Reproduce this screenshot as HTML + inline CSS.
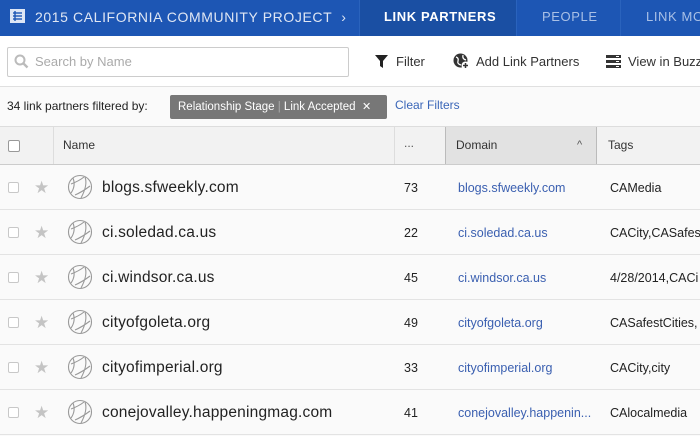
<!DOCTYPE html><html><head><style>
*{box-sizing:border-box;margin:0;padding:0}
body{width:700px;height:436px;overflow:hidden;font-family:"Liberation Sans",sans-serif;background:#fafafa;position:relative;color:#333}
.top{position:absolute;left:0;top:0;width:700px;height:36px;background:#1d56b4}
.top .t{position:absolute;top:0;height:36px;line-height:34px;font-size:14px;letter-spacing:0.6px;color:#fff;white-space:nowrap}
.ab{position:absolute;white-space:nowrap}
.row{position:absolute;left:0;width:700px;height:45px;border-bottom:1px solid #e3e3e3;background:#fafafa}
.row span{position:absolute;top:1px;line-height:44px;white-space:nowrap}
.cb{position:absolute;width:11px;height:11px;border:1px solid #c8c8c8;border-radius:2px;background:#fff}
</style></head><body>
<div class="top">
<svg class="ab" style="left:10px;top:9px" width="15" height="14"><rect x="0.5" y="0.5" width="14" height="13" fill="#dde6f5" stroke="#dde6f5"/><g stroke="#1d56b4" stroke-width="1.4"><line x1="3" y1="4" x2="12" y2="4"/><line x1="3" y1="7" x2="12" y2="7"/><line x1="3" y1="10" x2="12" y2="10"/><line x1="5" y1="2" x2="5" y2="12"/></g></svg>
<div class="t" style="left:35px;color:#dfe6f3">2015 CALIFORNIA COMMUNITY PROJECT&nbsp;&nbsp;›</div>
<div class="ab" style="left:359px;top:0;width:158px;height:36px;background:#1a4fa3;border-left:1px solid #2a63bd;border-right:1px solid #2a63bd"></div>
<div class="t" style="left:384px;font-weight:bold;font-size:13px">LINK PARTNERS</div>
<div class="t" style="left:542px;font-size:13px;color:#a9c0e6">PEOPLE</div>
<div class="ab" style="left:620px;top:0;width:1px;height:36px;background:#2a63bd"></div>
<div class="t" style="left:646px;font-size:13px;color:#a9c0e6">LINK MO</div>
</div>
<div class="ab" style="left:0;top:36px;width:700px;height:51px;background:#fff;border-bottom:1px solid #e0e0e0"></div>
<div class="ab" style="left:7px;top:47px;width:342px;height:30px;border:1px solid #ccc;border-radius:2px;background:#fff"></div>
<svg class="ab" style="left:14px;top:54px" width="15" height="15"><circle cx="6" cy="6" r="4.5" fill="none" stroke="#bbb" stroke-width="2"/><line x1="9.5" y1="9.5" x2="13.5" y2="13.5" stroke="#bbb" stroke-width="2.4"/></svg>
<div class="ab" style="left:35px;top:54px;font-size:13px;color:#aaa">Search by Name</div>
<svg class="ab" style="left:375px;top:55px" width="13" height="14"><path d="M0 0H13L8 6V13L5 11V6Z" fill="#222"/></svg>
<div class="ab" style="left:396px;top:54px;font-size:13px;color:#333">Filter</div>
<svg class="ab" style="left:453px;top:53px" width="17" height="17"><circle cx="7.5" cy="7.5" r="7" fill="#333"/><path d="M3 4Q6 5 5 8T8 12M10 2Q9 6 13 7" stroke="#fff" stroke-width="1.3" fill="none"/><circle cx="12.5" cy="12.5" r="4" fill="#fff"/><path d="M12.5 10V15M10 12.5H15" stroke="#333" stroke-width="1.5"/></svg>
<div class="ab" style="left:476px;top:54px;font-size:13px;color:#333">Add Link Partners</div>
<svg class="ab" style="left:606px;top:55px" width="15" height="13"><g fill="#333"><rect y="0" width="15" height="3"/><rect y="5" width="15" height="3"/><rect y="10" width="15" height="3"/></g><g fill="#fff"><rect x="10" y="1" width="3" height="1"/><rect x="10" y="6" width="3" height="1"/><rect x="10" y="11" width="3" height="1"/></g></svg>
<div class="ab" style="left:628px;top:54px;font-size:13px;color:#333">View in Buzz</div>
<div class="ab" style="left:7px;top:99px;font-size:12px;color:#222">34 link partners filtered by:</div>
<div class="ab" style="left:170px;top:95px;width:217px;height:24px;background:#777;border-radius:2px;color:#fff;font-size:11.5px;line-height:24px;padding-left:8px">Relationship Stage <span style="color:#aaa">|</span> Link Accepted &nbsp;<span style="font-size:11px">✕</span></div>
<div class="ab" style="left:395px;top:98px;font-size:12px;color:#3a66b8">Clear Filters</div>
<div class="ab" style="left:0;top:126px;width:700px;height:39px;background:#f2f2f2;border-top:1px solid #ddd;border-bottom:1px solid #ccc"></div>
<div class="ab" style="left:445px;top:127px;width:152px;height:37px;background:#e2e2e2;border-left:1px solid #bbb;border-right:1px solid #bbb"></div>
<div class="ab" style="left:53px;top:127px;width:1px;height:37px;background:#ddd"></div>
<div class="ab" style="left:394px;top:127px;width:1px;height:37px;background:#ddd"></div>
<div class="cb" style="left:8px;top:140px;width:12px;height:12px;border-color:#999"></div>
<div class="ab" style="left:63px;top:138px;font-size:12px;color:#333">Name</div>
<div class="ab" style="left:404px;top:136px;font-size:12px;color:#555">...</div>
<div class="ab" style="left:456px;top:138px;font-size:12px;color:#333">Domain</div>
<div class="ab" style="left:577px;top:139px;font-size:11px;color:#555">^</div>
<div class="ab" style="left:608px;top:138px;font-size:12px;color:#333">Tags</div>
<div id="rows"></div>
<script>
var d=[["blogs.sfweekly.com","73","blogs.sfweekly.com","CAMedia"],["ci.soledad.ca.us","22","ci.soledad.ca.us","CACity,CASafes"],["ci.windsor.ca.us","45","ci.windsor.ca.us","4/28/2014,CACi"],["cityofgoleta.org","49","cityofgoleta.org","CASafestCities,"],["cityofimperial.org","33","cityofimperial.org","CACity,city"],["conejovalley.happeningmag.com","41","conejovalley.happenin...","CAlocalmedia"]];
var h="";d.forEach(function(r,i){var t=165+i*45;h+='<div class="row" style="top:'+t+'px"><div class="cb" style="left:8px;top:17px"></div><span style="left:34px;color:#c4c4c4;font-size:17px">★</span><svg style="position:absolute;left:67px;top:9px" width="26" height="26"><g fill="none" stroke="#999" stroke-width="1.1"><circle cx="13" cy="13" r="11.5"/><path d="M6 4Q9 12 4 19M8 21Q15 18 23 12M18 3Q21 11 14 24M4 10Q12 7 17 3"/></g></svg><span style="left:102px;font-size:15.5px;color:#222;letter-spacing:0.2px">'+r[0]+'</span><span style="left:404px;font-size:12.5px;color:#222">'+r[1]+'</span><span style="left:458px;font-size:12.5px;color:#3a5fb0">'+r[2]+'</span><span style="left:610px;font-size:12.5px;color:#222">'+r[3]+'</span></div>';});
document.getElementById("rows").innerHTML=h;
</script>
</body></html>
